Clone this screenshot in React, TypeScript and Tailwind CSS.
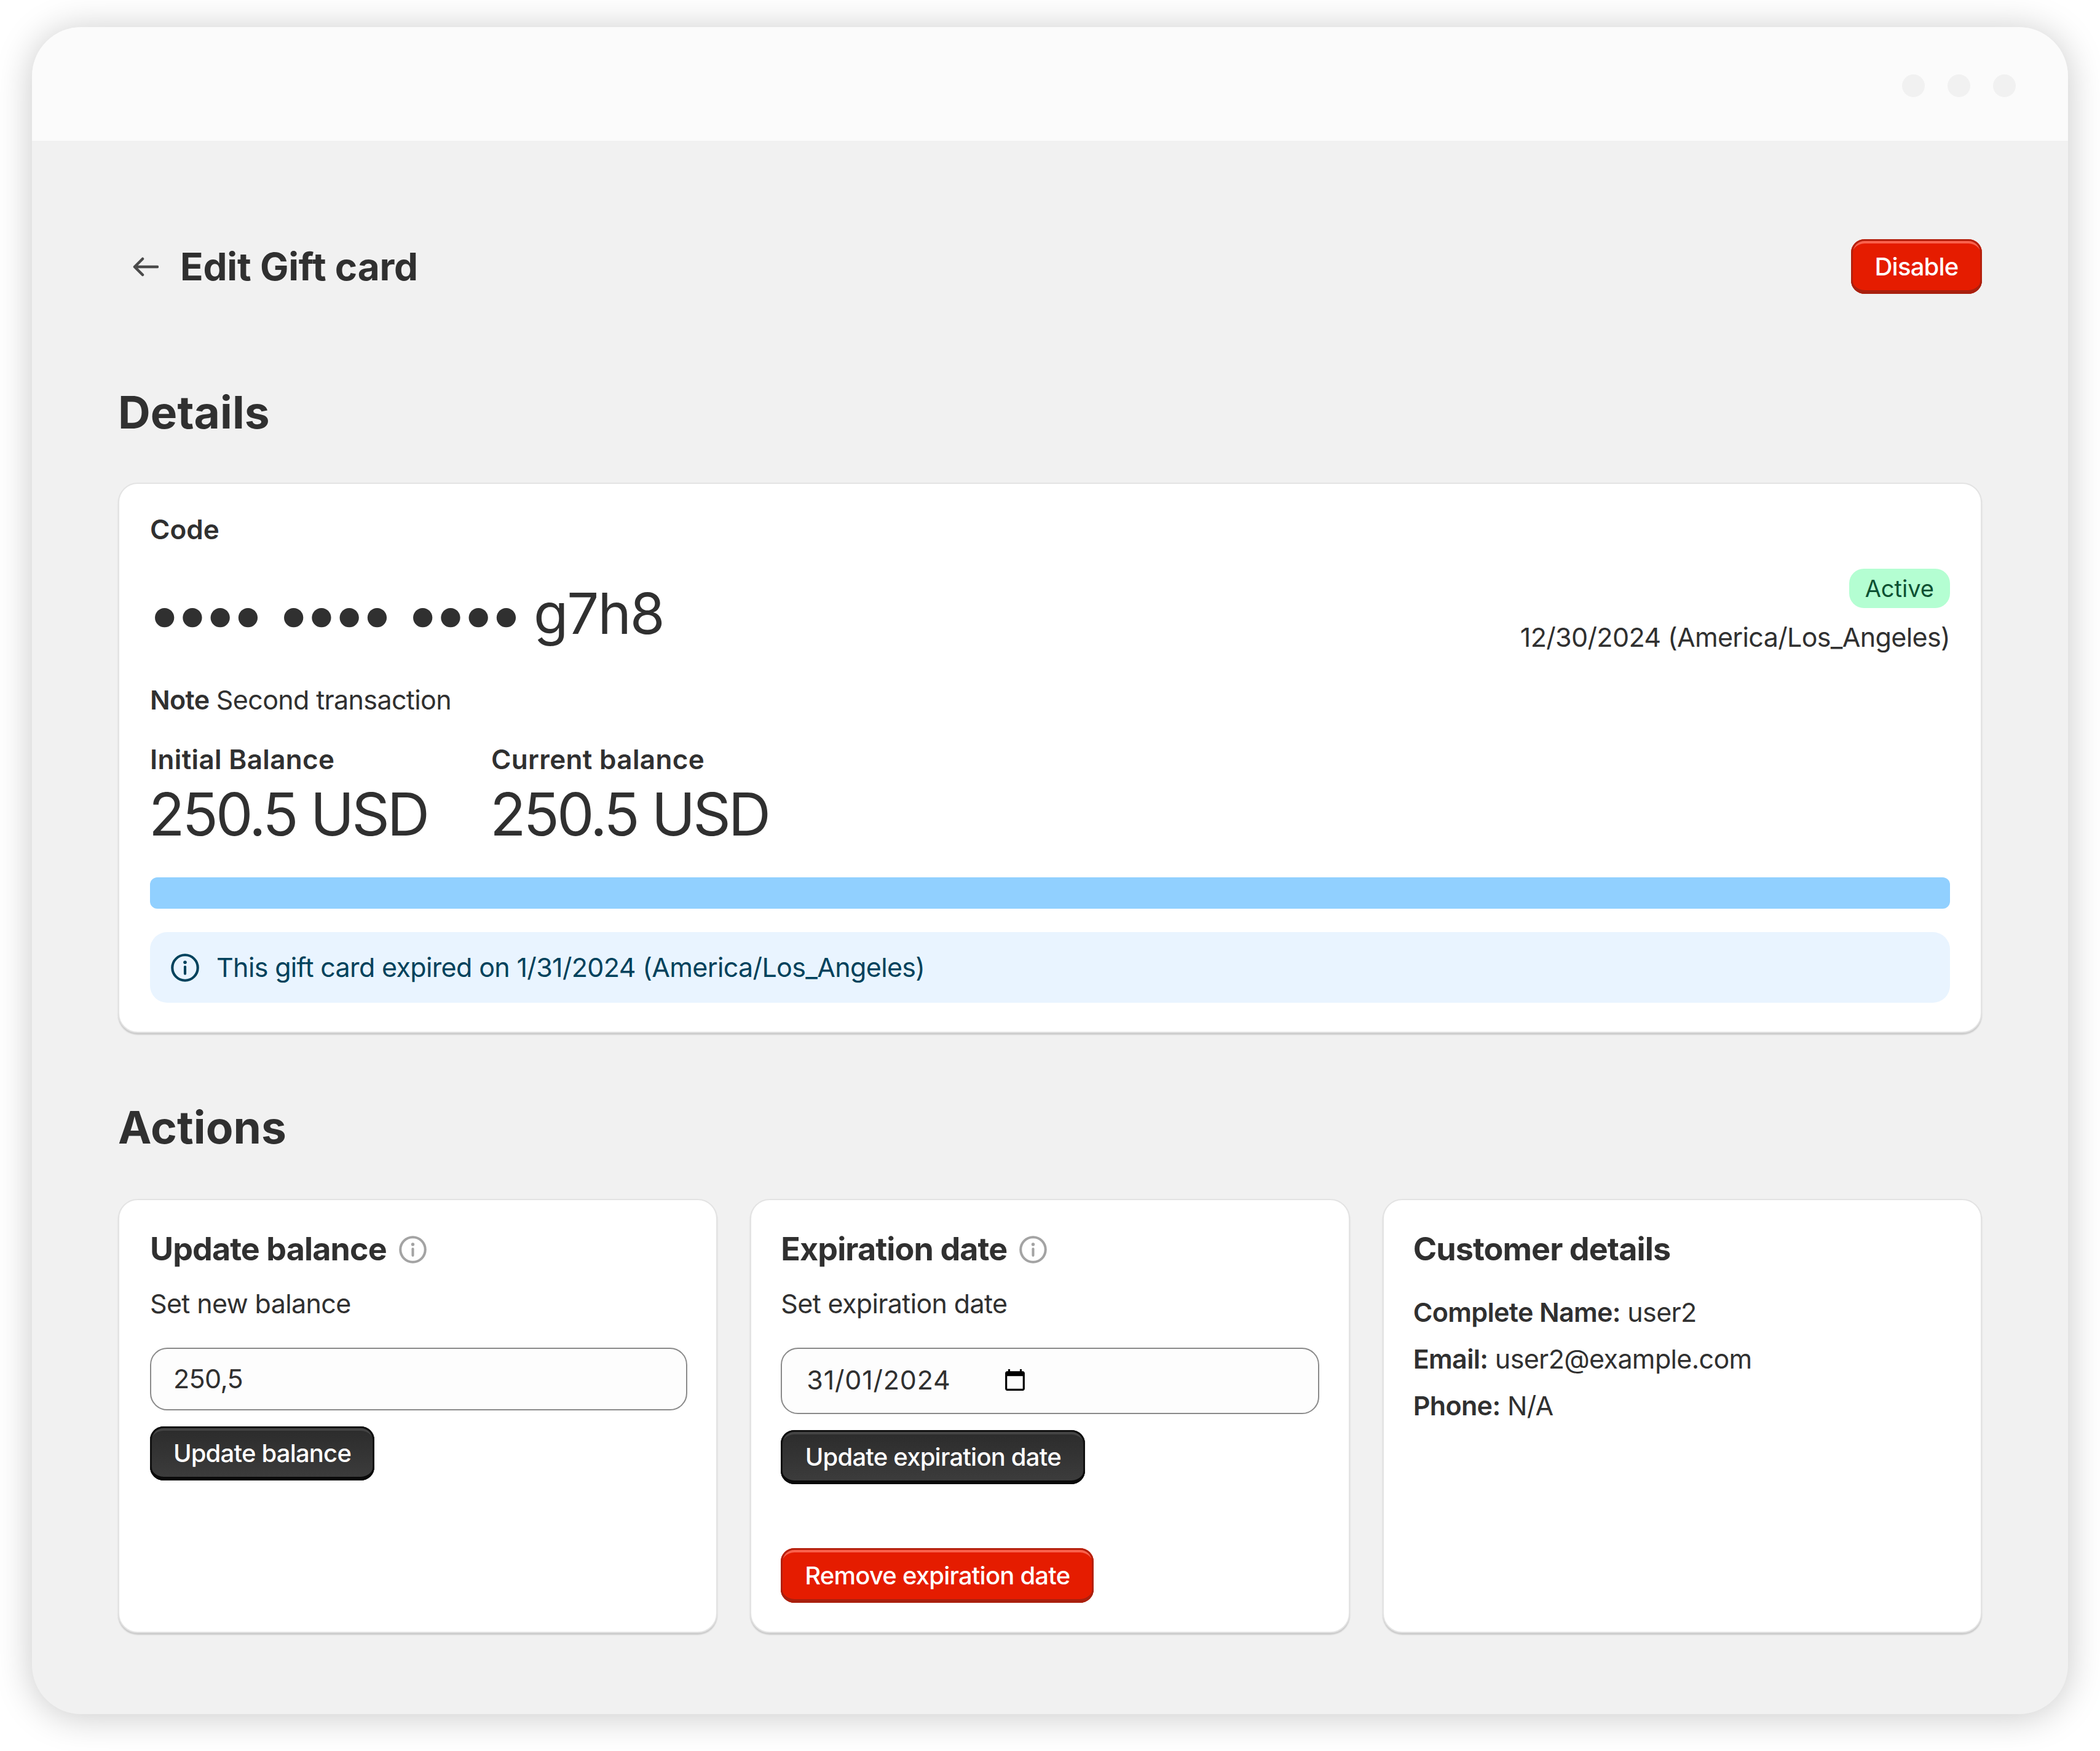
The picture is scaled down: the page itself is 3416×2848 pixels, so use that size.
const fontStack = { fontFamily: '"Inter", "Liberation Sans", sans-serif' }

function InfoIcon({ className }: { className: string }) {
  return (
    <svg viewBox="0 0 20 20" fill="none" stroke="currentColor" className={className}>
      <circle cx="10" cy="10" r="9" strokeWidth="1.8" />
      <path d="M10 9.4v4.8" strokeWidth="1.8" strokeLinecap="round" />
      <circle cx="10" cy="6.2" r="1.2" fill="currentColor" stroke="none" />
    </svg>
  )
}

function DarkButton({ label, width }: { label: string; width: string }) {
  return (
    <button
      className={`flex h-[88px] items-center justify-center rounded-[22px] bg-linear-to-b from-[#2b2b2b] to-[#3d3d3d] text-[40px] font-medium tracking-[-0.8px] text-white shadow-[inset_0_-6px_0_0_#0a0a0a,inset_0_0_0_3px_#111111,inset_0_7px_0_0_#444444] ${width}`}
    >
      {label}
    </button>
  )
}

function RedButton({ label, width }: { label: string; width: string }) {
  return (
    <button
      className={`flex h-[89px] items-center justify-center rounded-[22px] bg-[#e51c00] text-[40px] font-medium tracking-[-0.8px] text-white shadow-[inset_0_-6px_0_0_#a9200e,inset_0_0_0_3px_#b5200d,inset_0_7px_0_0_#f9614c] ${width}`}
    >
      {label}
    </button>
  )
}

const cardClass =
  "rounded-[32px] border-2 border-[#e3e3e3] bg-white shadow-[0_3px_2px_rgba(0,0,0,0.16)]"

const bodyText = "text-[43px] leading-[56px] tracking-[-0.65px]"

export default function App() {
  return (
    <div className="min-h-[2848px] bg-white pt-[44px] pl-[52px] text-[#303030]" style={fontStack}>
      <div className="flex h-[2744px] w-[3312px] flex-col overflow-hidden rounded-[80px] bg-[#f1f1f1] shadow-[0_4px_60px_rgba(0,0,0,0.22)]">
        <div className="flex h-[185px] shrink-0 items-center justify-end gap-[37px] bg-[#fbfbfb] pr-[85px] pt-[5px]">
          <span className="h-[37px] w-[37px] rounded-full bg-[#f1f1f1]" />
          <span className="h-[37px] w-[37px] rounded-full bg-[#f1f1f1]" />
          <span className="h-[37px] w-[37px] rounded-full bg-[#f1f1f1]" />
        </div>

        <div className="flex flex-col px-[140px]">
          <div className="mt-[160px] flex items-center justify-between">
            <div className="flex items-center">
              <svg viewBox="0 0 42 32" fill="none" stroke="#4a4a4a" strokeWidth="4.5" strokeLinecap="round" strokeLinejoin="round" className="ml-[24px] h-[32px] w-[42px]">
                <path d="M40 16H3M16 3 3 16l13 13" />
              </svg>
              <h1 className="ml-[35px] text-[62px] font-bold leading-none tracking-[-0.2px]">Edit Gift card</h1>
            </div>
            <RedButton label="Disable" width="w-[213px]" />
          </div>

          <h2 className="mt-[153px] text-[73px] font-bold leading-[80px] tracking-[0.1px]">Details</h2>

          <section className={`mt-[74px] flex h-[895px] flex-col px-[50px] ${cardClass}`}>
            <div className="mt-[46px] text-[44px] font-semibold leading-[56px]">Code</div>
            <div className="flex items-start justify-between">
              <div className="mt-[49px] h-[120px] text-[92px] leading-[120px] tracking-[-2px]">
                <span className="align-[-3px] text-[100px] font-bold leading-[100px] tracking-[-2.2px] [word-spacing:7.7px]">•••• •••• ••••</span>
                <span className="ml-[23px]">g7h8</span>
              </div>
              <div className="flex flex-col items-end">
                <span className="mt-[36px] flex h-[64px] items-center rounded-[24px] bg-[#b4fed2] px-[26px] text-[38px] text-[#0c5132]">Active</span>
                <span className={`mt-[19px] ${bodyText}`}>12/30/2024 (America/Los_Angeles)</span>
              </div>
            </div>
            <p className={`mt-[46px] ${bodyText}`}>
              <b className="font-semibold">Note</b> Second transaction
            </p>
            <div className="mt-[41px] flex gap-[104px]">
              <div>
                <div className="text-[44px] font-semibold leading-[56px] tracking-[0.35px]">Initial Balance</div>
                <div className="mt-[6px] -ml-[2px] text-[96px] leading-[110px] tracking-[-4px]">250.5 USD</div>
              </div>
              <div>
                <div className="text-[44px] font-semibold leading-[56px] tracking-[0.35px]">Current balance</div>
                <div className="mt-[6px] -ml-[2px] text-[96px] leading-[110px] tracking-[-4px]">250.5 USD</div>
              </div>
            </div>
            <div className="mt-[48px] h-[51px] rounded-[12px] bg-[#91d0ff]" />
            <div className={`mt-[38px] flex h-[115px] items-center gap-[28px] rounded-[28px] bg-[#e9f4ff] px-[34px] pb-[2px] text-[#00425c] ${bodyText}`}>
              <InfoIcon className="mt-[2px] h-[46px] w-[46px]" />
              This gift card expired on 1/31/2024 (America/Los_Angeles)
            </div>
          </section>

          <h2 className="mt-[114px] text-[73px] font-bold leading-[80px] tracking-[0.1px]">Actions</h2>

          <div className="mt-[76px] grid h-[706px] grid-cols-3 gap-[53px]">
            <section className={`pl-[50px] pr-[47px] ${cardClass}`}>
              <div className="mt-[50px] flex items-center gap-[20px]">
                <h3 className="text-[52px] font-bold leading-[60px] tracking-[-0.9px]">Update balance</h3>
                <InfoIcon className="h-[45px] w-[45px] text-[#a3a3a3]" />
              </div>
              <p className={`mt-[30px] ${bodyText}`}>Set new balance</p>
              <input readOnly value="250,5" className={`mt-[44px] block h-[102px] w-full rounded-[28px] border-2 border-[#8a8a8a] bg-[#fdfdfd] px-[36px] pb-[3px] ${bodyText}`} />
              <div className="mt-[26px]">
                <DarkButton label="Update balance" width="w-[365px]" />
              </div>
            </section>

            <section className={`px-[48px] ${cardClass}`}>
              <div className="mt-[50px] flex items-center gap-[20px]">
                <h3 className="text-[52px] font-bold leading-[60px] tracking-[-0.9px]">Expiration date</h3>
                <InfoIcon className="h-[45px] w-[45px] text-[#a3a3a3]" />
              </div>
              <p className={`mt-[30px] ${bodyText}`}>Set expiration date</p>
              <div className="mt-[44px] flex h-[108px] items-center rounded-[28px] border-2 border-[#8a8a8a] bg-[#fdfdfd] pb-[3px] pl-[40px] text-[43px]">
                <span className="tracking-[0.8px]">31/01/2024</span>
                <svg viewBox="2 1 20 22" className="ml-[88px] h-[35px] w-[32px]" fill="#000">
                  <path d="M20 3h-1V1h-2v2H7V1H5v2H4c-1.1 0-2 .9-2 2v16c0 1.1.9 2 2 2h16c1.1 0 2-.9 2-2V5c0-1.1-.9-2-2-2zm0 18H4V8h16v13z" />
                </svg>
              </div>
              <div className="mt-[26px]">
                <DarkButton label="Update expiration date" width="w-[495px]" />
              </div>
              <div className="mt-[104px]">
                <RedButton label="Remove expiration date" width="w-[509px]" />
              </div>
            </section>

            <section className={`px-[48px] ${cardClass}`}>
              <h3 className="mt-[50px] text-[52px] font-bold leading-[60px] tracking-[-0.9px]">Customer details</h3>
              <div className={`mt-[44px] flex flex-col gap-[20px] ${bodyText}`}>
                <p><b className="font-semibold">Complete Name:</b> user2</p>
                <p><b className="font-semibold">Email:</b> user2@example.com</p>
                <p><b className="font-semibold">Phone:</b> N/A</p>
              </div>
            </section>
          </div>
        </div>
      </div>
    </div>
  )
}
